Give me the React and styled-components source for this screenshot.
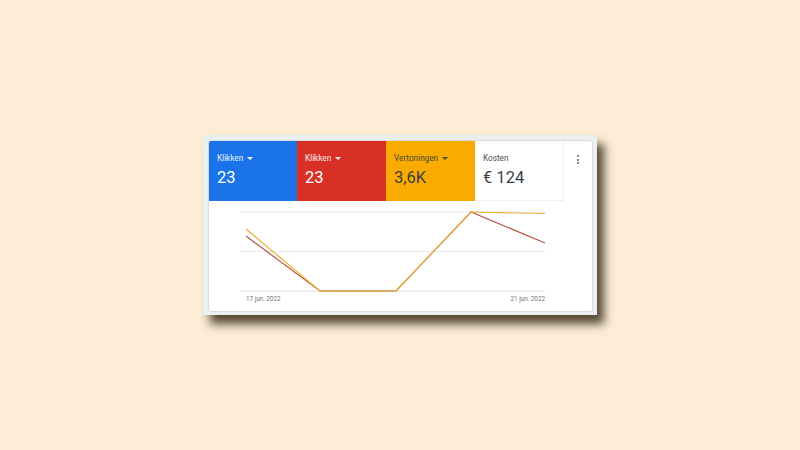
import React from "react";
import styled, { createGlobalStyle } from "styled-components";

const Global = createGlobalStyle`
  html, body { margin: 0; padding: 0; }
  body { background: #fdedd6; font-family: Roboto, "Liberation Sans", sans-serif; }
`;

const Page = styled.div`
  width: 800px;
  height: 450px;
  display: flex;
  align-items: center;
  justify-content: center;
`;

const Frame = styled.div`
  width: 394px;
  height: 180px;
  box-sizing: border-box;
  padding: 5px 4px 3px 5px;
  background: #eceff0;
  box-shadow: 7px 9px 9px rgba(48, 38, 18, 0.82);
  display: flex;
`;

const Card = styled.div`
  flex: 1;
  background: #fff;
  border: 1px solid #d9dcde;
  border-radius: 3px;
  overflow: hidden;
  display: flex;
  flex-direction: column;
`;

const Tiles = styled.div`
  display: flex;
  height: 60px;
`;

const Tile = styled.div`
  width: ${(p) => p.$w || 89}px;
  box-sizing: border-box;
  background: ${(p) => p.$bg};
  color: ${(p) => p.$fg};
  padding: 12px 0 0 8px;
  display: flex;
  flex-direction: column;
  gap: 5px;
  ${(p) => (p.$plain ? "border-right: 1px solid #f1f1f1; border-bottom: 1px solid #f1f1f1;" : "")}
`;

const Label = styled.div`
  font-size: 8.2px;
  line-height: 10px;
  display: flex;
  align-items: center;
  gap: 4px;
  opacity: 0.92;
`;

const Caret = styled.span`
  width: 0;
  height: 0;
  border-left: 3px solid transparent;
  border-right: 3px solid transparent;
  border-top: 3px solid currentColor;
`;

const Value = styled.div`
  font-size: 16.5px;
  line-height: 20px;
  font-weight: 400;
`;

const Menu = styled.div`
  flex: 1;
  display: flex;
  justify-content: center;
  padding-top: 14px;
`;

const Dots = styled.div`
  display: flex;
  flex-direction: column;
  gap: 1.6px;
  & span {
    width: 2px;
    height: 2px;
    border-radius: 50%;
    background: #5f6368;
  }
`;

const Chart = styled.svg`
  display: block;
`;

const metrics = [
  { label: "Klikken", value: "23", bg: "#1a73e8", fg: "#fff", caret: true, w: 88 },
  { label: "Klikken", value: "23", bg: "#d93025", fg: "#fff", caret: true },
  { label: "Vertoningen", value: "3,6K", bg: "#f9ab00", fg: "#3c4043", caret: true },
  { label: "Kosten", value: "€ 124", bg: "#fff", fg: "#3c4043", plain: true },
];

export default function App() {
  return (
    <>
      <Global />
      <Page>
        <Frame>
          <Card>
            <Tiles>
              {metrics.map((m, i) => (
                <Tile key={i} $bg={m.bg} $fg={m.fg} $w={m.w} $plain={m.plain}>
                  <Label>
                    {m.label}
                    {m.caret && <Caret />}
                  </Label>
                  <Value>{m.value}</Value>
                </Tile>
              ))}
              <Menu>
                <Dots>
                  <span />
                  <span />
                  <span />
                </Dots>
              </Menu>
            </Tiles>
            <Chart width="383" height="110" viewBox="0 0 383 110">
              <line x1="31" x2="336" y1="11" y2="11" stroke="#e8eaed" strokeWidth="1" />
              <line x1="31" x2="336" y1="50.5" y2="50.5" stroke="#e8eaed" strokeWidth="1" />
              <line x1="31" x2="336" y1="90" y2="90" stroke="#dadce0" strokeWidth="1" />
              <polyline
                points="37,35 111,90 187,90 262,11 336,42"
                fill="none"
                stroke="#b9564c"
                strokeWidth="1.2"
              />
              <polyline
                points="37,28 111,90 187,90 262,11 336,12.5"
                fill="none"
                stroke="#e8b232"
                strokeWidth="1.2"
              />
              <text x="37" y="99.5" fontSize="6.3" fill="#70757a" fontFamily="Roboto, sans-serif">
                17 jun. 2022
              </text>
              <text x="336" y="99.5" fontSize="6.3" fill="#70757a" textAnchor="end" fontFamily="Roboto, sans-serif">
                21 jun. 2022
              </text>
            </Chart>
          </Card>
        </Frame>
      </Page>
    </>
  );
}
